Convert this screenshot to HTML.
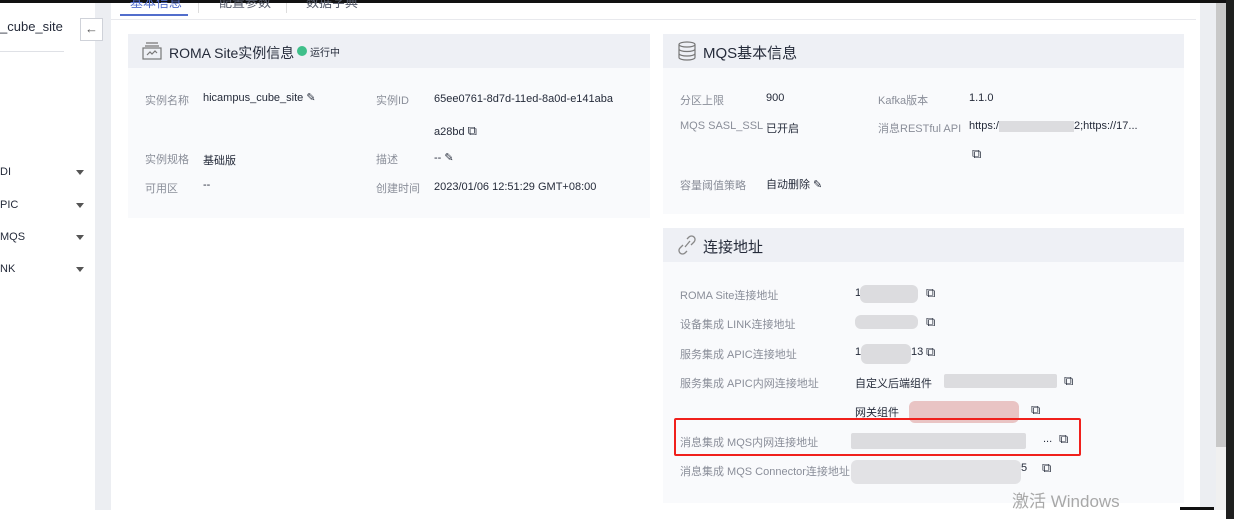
<!DOCTYPE html>
<html><head><meta charset="utf-8"><style>
*{margin:0;padding:0;box-sizing:border-box}
body{width:1234px;height:519px;overflow:hidden;background:#fff;position:relative;font-family:"Liberation Sans","Noto Sans CJK SC",sans-serif;color:#252b3a}
.a{position:absolute;white-space:nowrap}
.lb{font-size:11px;color:#8a8e99}
.v{font-size:11px;color:#252b3a}
.panel{position:absolute;background:#f9fafc}
.ph{position:absolute;left:0;right:0;top:0;height:34px;background:#eef0f5}
.ht{font-size:15px;color:#252b3a}
.bl{position:absolute;background:#dcdcdf;border-radius:6px}
.side{font-size:11px;color:#252b3a}
.tri{position:absolute;width:0;height:0;border-left:4px solid transparent;border-right:4px solid transparent;border-top:5px solid #555}
.cp{font-size:13px}
</style></head><body>
<div class="a" style="left:0;top:0;width:1234px;height:3px;background:#111"></div>
<!-- sidebar -->
<div class="a" style="left:95px;top:3px;width:16px;height:507px;background:#eceef2"></div>
<div class="a side" style="left:0;top:19px;font-size:13px">_cube_site</div>
<div class="a" style="left:0;top:51px;width:64px;height:1px;background:#dfe1e6"></div>
<div class="a" style="left:80px;top:18px;width:23px;height:23px;border:1px solid #cfd2d9;background:#fff;font-size:13px;color:#555;text-align:center;line-height:20px">←</div>
<div class="a side" style="left:0;top:166px">DI</div><div class="tri" style="left:76px;top:170px"></div>
<div class="a side" style="left:0;top:199px">PIC</div><div class="tri" style="left:76px;top:203px"></div>
<div class="a side" style="left:0;top:231px">MQS</div><div class="tri" style="left:76px;top:235px"></div>
<div class="a side" style="left:0;top:263px">NK</div><div class="tri" style="left:76px;top:267px"></div>
<!-- tabs -->
<div class="a" style="left:130px;top:-8px;font-size:13px;color:#526ecc">基本信息</div>
<div class="a" style="left:219px;top:-8px;font-size:13px;color:#575d6c">配置参数</div>
<div class="a" style="left:306px;top:-8px;font-size:13px;color:#575d6c">数据字典</div>
<div class="a" style="left:198px;top:3px;width:1px;height:10px;background:#ddd"></div>
<div class="a" style="left:286px;top:3px;width:1px;height:10px;background:#ddd"></div>
<div class="a" style="left:111px;top:19px;width:1085px;height:1px;background:#e8e9ed"></div>
<div class="a" style="left:120px;top:14px;width:68px;height:2px;background:#526ecc"></div>
<!-- right edge -->
<div class="a" style="left:1200px;top:3px;width:16px;height:507px;background:#eceef2"></div>
<div class="a" style="left:1216px;top:3px;width:10px;height:507px;background:#f0f0f0"></div>
<div class="a" style="left:1216px;top:3px;width:10px;height:444px;background:#c8c8c8"></div>
<div class="a" style="left:1226px;top:0;width:8px;height:519px;background:#1e1f1e"></div>
<div class="a" style="left:1180px;top:507px;width:34px;height:3px;background:#111"></div>
<!-- panel 1 -->
<div class="panel" style="left:128px;top:34px;width:522px;height:184px">
<div class="ph"></div>
<svg class="a" style="left:14px;top:8px" width="20" height="18" viewBox="0 0 20 18" fill="none" stroke="#777" stroke-width="1.2"><path d="M4 1h12M3 4h14"/><rect x="1" y="6" width="18" height="11"/><path d="M5 13l3-3 2 2 3-3 2 2"/></svg>
<div class="a ht" style="left:41px;top:9px;font-size:14px">ROMA Site实例信息</div>
<div class="a" style="left:169px;top:12px;width:10px;height:10px;border-radius:50%;background:#3fbf8a"></div>
<div class="a" style="left:182px;top:10px;font-size:10px">运行中</div>
<div class="a lb" style="left:17px;top:58px">实例名称</div>
<div class="a v" style="left:75px;top:57px">hicampus_cube_site ✎</div>
<div class="a lb" style="left:248px;top:58px">实例ID</div>
<div class="a v" style="left:306px;top:59px">65ee0761-8d7d-11ed-8a0d-e141aba</div>
<div class="a v" style="left:306px;top:89px">a28bd <span class="cp">⧉</span></div>
<div class="a lb" style="left:17px;top:117px">实例规格</div>
<div class="a v" style="left:75px;top:118px">基础版</div>
<div class="a lb" style="left:248px;top:117px">描述</div>
<div class="a v" style="left:306px;top:117px">-- ✎</div>
<div class="a lb" style="left:17px;top:146px">可用区</div>
<div class="a v" style="left:75px;top:145px">--</div>
<div class="a lb" style="left:248px;top:146px">创建时间</div>
<div class="a v" style="left:306px;top:147px">2023/01/06 12:51:29 GMT+08:00</div>
</div>
<!-- panel 2 -->
<div class="panel" style="left:663px;top:34px;width:521px;height:180px">
<div class="ph"></div>
<svg class="a" style="left:15px;top:7px" width="18" height="20" viewBox="0 0 18 20" fill="none" stroke="#777" stroke-width="1.2"><ellipse cx="9" cy="3.5" rx="8" ry="2.5"/><path d="M1 3.5v13c0 1.4 3.6 2.5 8 2.5s8-1.1 8-2.5v-13M1 8c0 1.4 3.6 2.5 8 2.5s8-1.1 8-2.5M1 12.5c0 1.4 3.6 2.5 8 2.5s8-1.1 8-2.5"/></svg>
<div class="a ht" style="left:40px;top:8px">MQS基本信息</div>
<div class="a lb" style="left:17px;top:58px">分区上限</div>
<div class="a v" style="left:103px;top:58px">900</div>
<div class="a lb" style="left:215px;top:58px">Kafka版本</div>
<div class="a v" style="left:306px;top:58px">1.1.0</div>
<div class="a lb" style="left:17px;top:86px">MQS SASL_SSL</div>
<div class="a v" style="left:103px;top:86px">已开启</div>
<div class="a lb" style="left:215px;top:86px">消息RESTful API</div>
<div class="a v" style="left:306px;top:86px">https:/<span style="display:inline-block;width:75px;height:11px;background:#dcdcdf;vertical-align:middle"></span>2;https://17...</div>
<div class="a v cp" style="left:309px;top:112px">⧉</div>
<div class="a lb" style="left:17px;top:143px">容量阈值策略</div>
<div class="a v" style="left:103px;top:142px">自动删除 ✎</div>
</div>
<!-- panel 3 -->
<div class="panel" style="left:663px;top:228px;width:521px;height:275px">
<div class="ph"></div>
<svg class="a" style="left:14px;top:6px" width="20" height="22" viewBox="0 0 20 22" fill="none" stroke="#888" stroke-width="1.3"><path d="M8 13l5-6M10 5l2-2a3.5 3.5 0 015 5l-3 3M10 17l-2 2a3.5 3.5 0 01-5-5l3-3"/></svg>
<div class="a ht" style="left:40px;top:8px">连接地址</div>
<div class="a lb" style="left:17px;top:59px">ROMA Site连接地址</div>
<div class="a lb" style="left:17px;top:88px">设备集成 LINK连接地址</div>
<div class="a lb" style="left:17px;top:118px">服务集成 APIC连接地址</div>
<div class="a lb" style="left:17px;top:147px">服务集成 APIC内网连接地址</div>
<div class="a lb" style="left:17px;top:206px">消息集成 MQS内网连接地址</div>
<div class="a lb" style="left:17px;top:235px">消息集成 MQS Connector连接地址</div>
<div class="a v" style="left:192px;top:59px">1</div>
<div class="bl" style="left:197px;top:57px;width:58px;height:18px"></div>
<div class="a v cp" style="left:263px;top:57px">⧉</div>
<div class="bl" style="left:192px;top:87px;width:63px;height:14px"></div>
<div class="a v cp" style="left:263px;top:86px">⧉</div>
<div class="a v" style="left:192px;top:118px">1</div>
<div class="bl" style="left:198px;top:116px;width:50px;height:20px"></div>
<div class="a v" style="left:248px;top:118px">13</div>
<div class="a v cp" style="left:263px;top:116px">⧉</div>
<div class="a v" style="left:192px;top:147px">自定义后端组件</div>
<div class="bl" style="left:281px;top:146px;width:113px;height:14px;border-radius:2px"></div>
<div class="a v cp" style="left:401px;top:145px">⧉</div>
<div class="a v" style="left:192px;top:176px">网关组件</div>
<div class="bl" style="left:246px;top:173px;width:110px;height:22px;background:#e9c4c4"></div>
<div class="a v cp" style="left:368px;top:174px">⧉</div>
<div class="bl" style="left:188px;top:205px;width:175px;height:16px;border-radius:2px"></div>
<div class="a v" style="left:380px;top:205px">...</div>
<div class="a v cp" style="left:396px;top:203px">⧉</div>
<div class="bl" style="left:188px;top:232px;width:170px;height:24px;background:#e2e2e5"></div>
<div class="a v" style="left:358px;top:234px">5</div>
<div class="a v cp" style="left:379px;top:232px">⧉</div>
</div>
<div class="a" style="left:674px;top:418px;width:407px;height:38px;border:2px solid #f0201c;border-radius:2px"></div>
<div class="a" style="left:1012px;top:487px;font-size:17px;color:#a8a8a8">激活 Windows</div>
<div class="a" style="left:111px;top:510px;width:1089px;height:9px;background:#fff"></div>
</body></html>
